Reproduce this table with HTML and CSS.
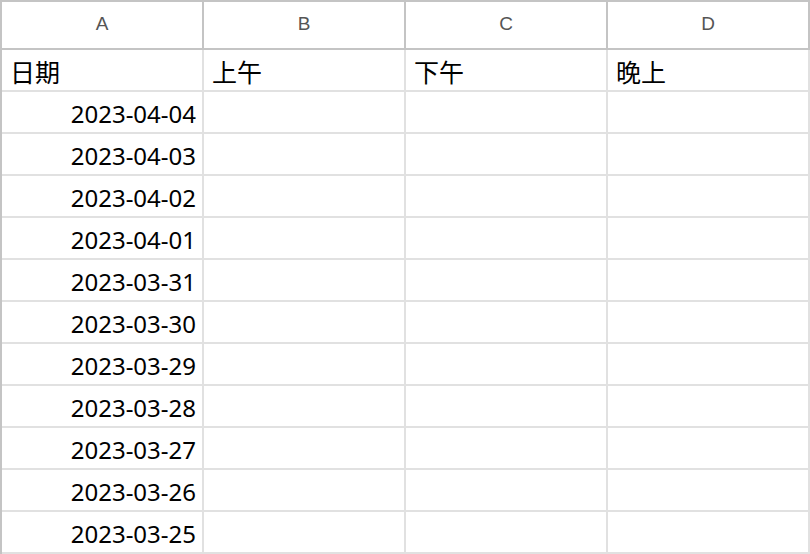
FILE: index.html
```html
<!DOCTYPE html>
<html lang="zh">
<head>
<meta charset="utf-8">
<link rel="stylesheet" href="styles.css">
</head>
<body>
<div class="sheet">
  <div class="col-head">A</div>
  <div class="col-head">B</div>
  <div class="col-head">C</div>
  <div class="col-head">D</div>

  <div class="cell text">日期</div>
  <div class="cell text">上午</div>
  <div class="cell text">下午</div>
  <div class="cell text">晚上</div>

  <div class="cell date">2023-04-04</div><div class="cell"></div><div class="cell"></div><div class="cell"></div>
  <div class="cell date">2023-04-03</div><div class="cell"></div><div class="cell"></div><div class="cell"></div>
  <div class="cell date">2023-04-02</div><div class="cell"></div><div class="cell"></div><div class="cell"></div>
  <div class="cell date">2023-04-01</div><div class="cell"></div><div class="cell"></div><div class="cell"></div>
  <div class="cell date">2023-03-31</div><div class="cell"></div><div class="cell"></div><div class="cell"></div>
  <div class="cell date">2023-03-30</div><div class="cell"></div><div class="cell"></div><div class="cell"></div>
  <div class="cell date">2023-03-29</div><div class="cell"></div><div class="cell"></div><div class="cell"></div>
  <div class="cell date">2023-03-28</div><div class="cell"></div><div class="cell"></div><div class="cell"></div>
  <div class="cell date">2023-03-27</div><div class="cell"></div><div class="cell"></div><div class="cell"></div>
  <div class="cell date">2023-03-26</div><div class="cell"></div><div class="cell"></div><div class="cell"></div>
  <div class="cell date">2023-03-25</div><div class="cell"></div><div class="cell"></div><div class="cell"></div>
</div>
</body>
</html>
```

FILE: styles.css
```css
* { box-sizing: border-box; }
html, body {
  margin: 0;
  padding: 0;
  background: #ffffff;
}
.sheet {
  display: grid;
  grid-template-columns: repeat(4, 202px);
  grid-template-rows: 48px;
  grid-auto-rows: 42px;
  width: 810px;
  border-top: 2px solid #c4c4c4;
  border-left: 2px solid #c4c4c4;
}
.col-head {
  border-right: 2px solid #c4c4c4;
  border-bottom: 2px solid #c4c4c4;
  display: flex;
  align-items: center;
  justify-content: center;
  font-family: "Liberation Sans", Arial, sans-serif;
  font-size: 19px;
  color: #555555;
  padding-bottom: 2px;
}
.cell {
  border-right: 2px solid #e1e1e1;
  border-bottom: 2px solid #e1e1e1;
  display: flex;
  align-items: center;
  color: #000000;
}
.text {
  font-family: "Noto Sans CJK SC", "Noto Sans", sans-serif;
  font-size: 25px;
  padding-left: 8px;
  padding-top: 2px;
}
.date {
  font-family: "Noto Sans", "Noto Sans CJK SC", sans-serif;
  font-size: 24px;
  justify-content: flex-end;
  padding-right: 6px;
  padding-top: 3px;
}
```
